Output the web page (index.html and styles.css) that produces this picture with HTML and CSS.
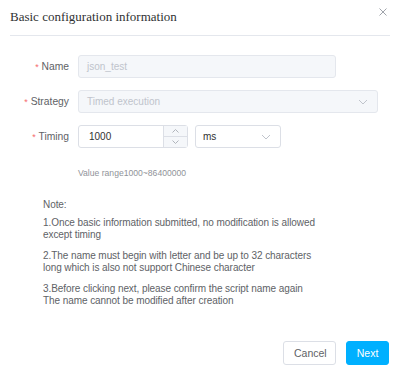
FILE: index.html
```html
<!DOCTYPE html>
<html>
<head>
<meta charset="utf-8">
<link rel="stylesheet" href="styles.css">
</head>
<body>
<div class="dialog">
  <div class="header">
    <div class="title">Basic configuration information</div>
    <svg class="close" width="8" height="8" viewBox="0 0 8 8"><path d="M0.5 0.5L7.5 7.5M7.5 0.5L0.5 7.5" stroke="#a0a4ab" stroke-width="1" fill="none"/></svg>
  </div>
  <div class="divider"></div>
  <div class="form">
    <div class="row">
      <div class="label"><span class="req">*</span> Name</div>
      <div class="input disabled name-input">json_test</div>
    </div>
    <div class="row">
      <div class="label"><span class="req">*</span> Strategy</div>
      <div class="input disabled strategy-input">Timed execution
        <svg class="chev" width="10" height="6" viewBox="0 0 10 6"><path d="M1 1L5 5L9 1" stroke="#c0c4cc" fill="none"/></svg>
      </div>
    </div>
    <div class="row">
      <div class="label"><span class="req">*</span> Timing</div>
      <div class="number">
        <div class="num-value">1000</div>
        <div class="spin">
          <div class="spin-btn"><svg width="7" height="4" viewBox="0 0 7 4"><path d="M0.5 3.5L3.5 0.5L6.5 3.5" stroke="#b0b4bb" fill="none"/></svg></div>
          <div class="spin-btn"><svg width="7" height="4" viewBox="0 0 7 4"><path d="M0.5 0.5L3.5 3.5L6.5 0.5" stroke="#b0b4bb" fill="none"/></svg></div>
        </div>
      </div>
      <div class="input unit">ms
        <svg class="chev" width="10" height="6" viewBox="0 0 10 6"><path d="M1 1L5 5L9 1" stroke="#c0c4cc" fill="none"/></svg>
      </div>
    </div>
    <div class="hint">Value range1000~86400000</div>
  </div>
  <div class="notes">
    <p class="note-title">Note:</p>
    <p>1.Once basic information submitted, no modification is allowed<br>except timing</p>
    <p>2.The name must begin with letter and be up to 32 characters<br>long which is also not support Chinese character</p>
    <p>3.Before clicking next, please confirm the script name again<br>The name cannot be modified after creation</p>
  </div>
  <div class="footer">
    <button class="btn cancel">Cancel</button>
    <button class="btn next">Next</button>
  </div>
</div>
</body>
</html>
```
FILE: styles.css
```css
html, body {
  margin: 0;
  padding: 0;
  background: #fff;
}
.dialog {
  width: 400px;
  height: 376px;
  box-sizing: border-box;
  padding: 0 10px;
  font-family: "Liberation Sans", Arial, sans-serif;
  color: #606266;
  display: flex;
  flex-direction: column;
}
.header {
  display: flex;
  justify-content: space-between;
  align-items: flex-start;
  height: 35px;
}
.title {
  font-family: "Liberation Serif", "Times New Roman", serif;
  font-size: 13px;
  color: #303133;
  margin-top: 9px;
  line-height: 16px;
}
.close {
  margin-top: 8px;
  margin-right: 3px;
}
.divider {
  height: 1px;
  background: #e4e7ed;
}
.form {
  display: flex;
  flex-direction: column;
  margin-top: 19px;
}
.row {
  display: flex;
  align-items: center;
  height: 23px;
  margin-bottom: 12px;
}
.label {
  width: 59px;
  text-align: right;
  padding-right: 9px;
  font-size: 10.3px;
  color: #606266;
}
.req {
  color: #f56c6c;
  font-size: 9px;
}
.input {
  box-sizing: border-box;
  height: 23px;
  border: 1px solid #dcdfe6;
  border-radius: 3px;
  font-size: 10px;
  display: flex;
  align-items: center;
  justify-content: space-between;
  padding: 0 9px 0 8px;
  color: #606266;
}
.disabled {
  background: #f5f7fa;
  border-color: #e4e7ed;
  color: #c0c4cc;
}
.name-input { width: 258px; }
.strategy-input { width: 300px; }
.number {
  box-sizing: border-box;
  width: 110px;
  height: 23px;
  border: 1px solid #dcdfe6;
  border-radius: 3px;
  display: flex;
  font-size: 10px;
  color: #303133;
}
.num-value {
  flex: 1;
  display: flex;
  align-items: center;
  padding-left: 10px;
}
.spin {
  width: 23px;
  border-left: 1px solid #dcdfe6;
  background: #f5f7fa;
  display: flex;
  flex-direction: column;
}
.spin-btn {
  flex: 1;
  display: flex;
  align-items: center;
  justify-content: center;
}
.spin-btn + .spin-btn {
  border-top: 1px solid #dcdfe6;
}
.unit {
  width: 86px;
  margin-left: 7px;
  padding-left: 7px;
  color: #303133;
}
.hint {
  margin-left: 68px;
  margin-top: 8px;
  font-size: 8.6px;
  line-height: 11px;
  color: #909399;
}
.notes {
  margin-left: 33px;
  margin-top: 20px;
  font-size: 10px;
  letter-spacing: -0.07px;
  line-height: 12px;
  color: #606266;
}
.notes p {
  margin: 0 0 9px 0;
}
.notes .note-title {
  margin-bottom: 6px;
}
.footer {
  margin-top: auto;
  margin-bottom: 11px;
  display: flex;
  justify-content: flex-end;
  gap: 10px;
  padding-right: 1px;
}
.btn {
  height: 24px;
  border-radius: 3px;
  font-family: "Liberation Sans", Arial, sans-serif;
  font-size: 10.5px;
  padding: 0 10px;
  border: 1px solid #dcdfe6;
  background: #fff;
  color: #606266;
}
.cancel { width: 53px; }
.next {
  width: 43px;
  background: #00b0ff;
  border-color: #00b0ff;
  color: #fff;
  padding: 0;
}
```
